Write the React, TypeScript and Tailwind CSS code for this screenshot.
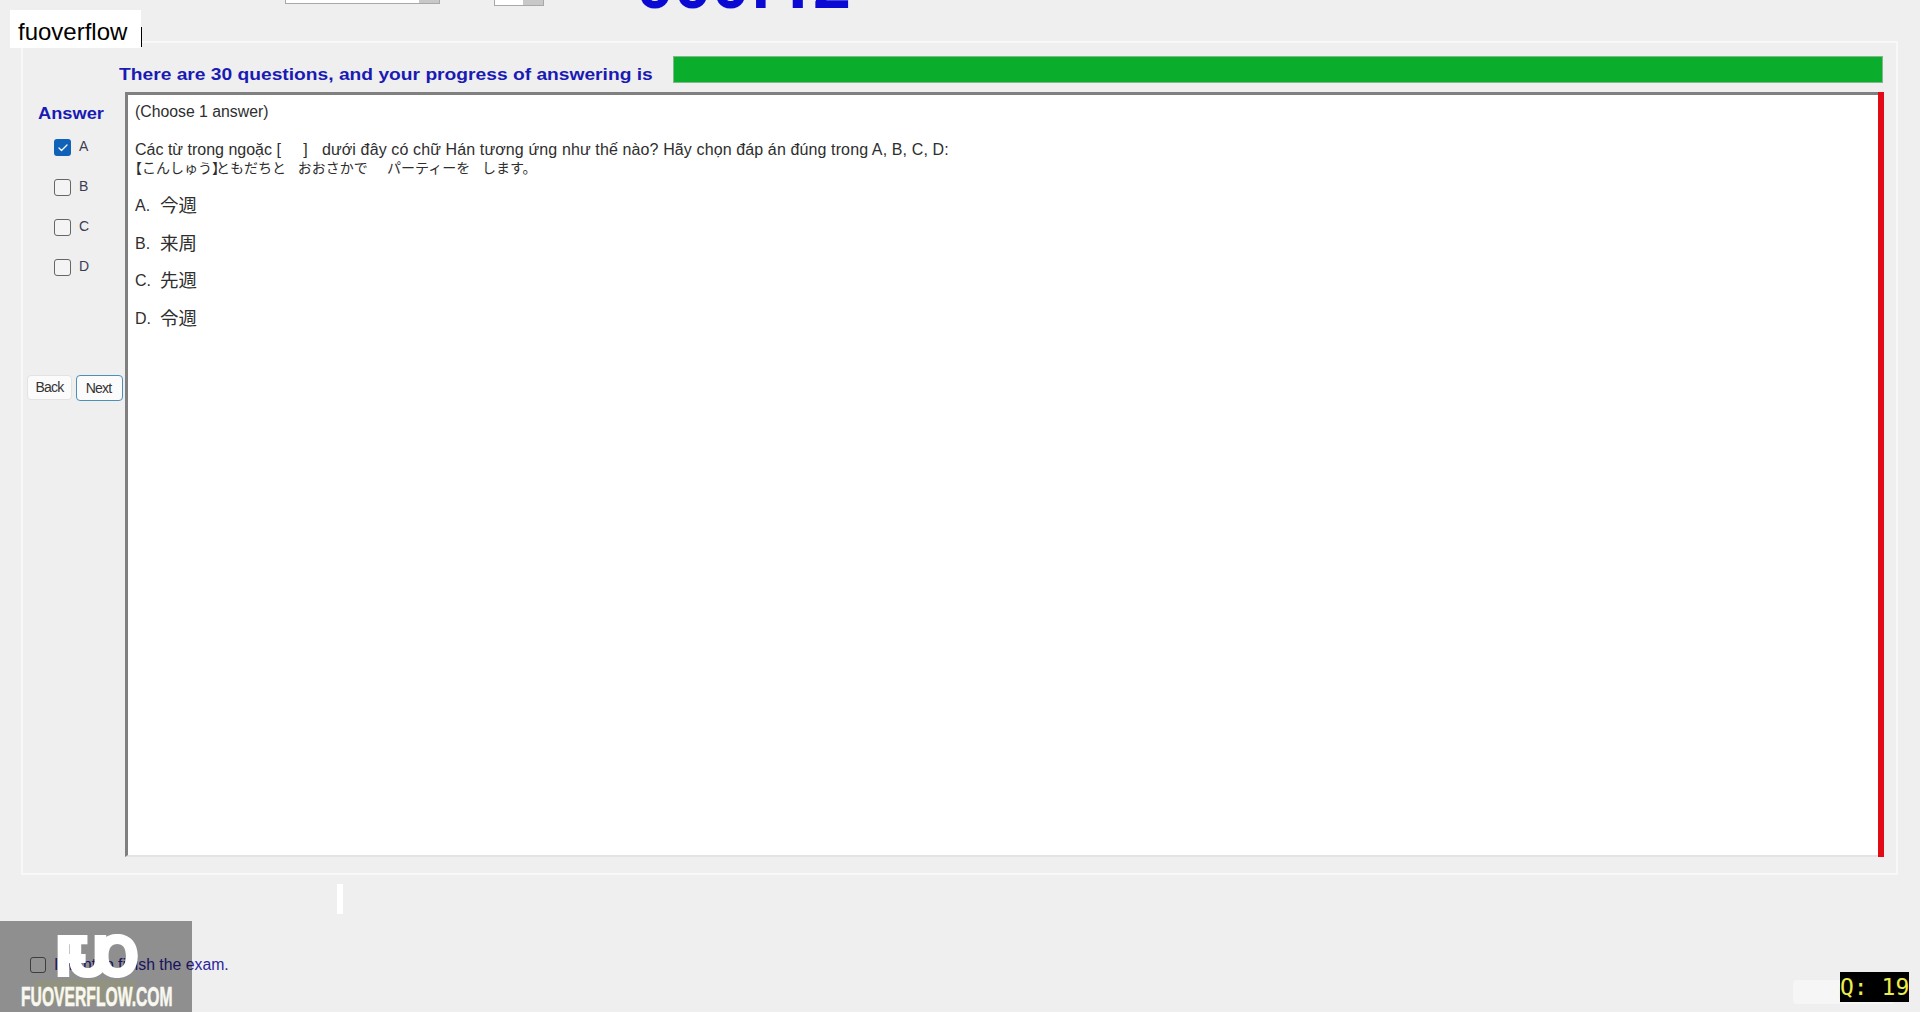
import { Check } from "lucide-react";

const answers = [
  { key: "A", text: "今週" },
  { key: "B", text: "来周" },
  { key: "C", text: "先週" },
  { key: "D", text: "令週" },
];

const cjk = "font-['Liberation_Sans','Noto_Sans_CJK_JP',sans-serif]";

function Box({ checked = false }: { checked?: boolean }) {
  if (checked) {
    return (
      <span className="flex h-[17px] w-[17px] items-center justify-center rounded-[3px] bg-[#0f62b8]">
        <Check size={12} strokeWidth={2.5} className="text-white" />
      </span>
    );
  }
  return <span className="h-[17px] w-[17px] rounded-[3px] border-[1.5px] border-[#666666] bg-[#f4f4f4]" />;
}

function Sidebar() {
  return (
    <div className="flex w-[102px] shrink-0 flex-col">
      <div className="mt-[11px] ml-[15px] origin-left scale-x-[1.14] text-[16px] leading-[22px] font-bold text-[#1a1ab4]">Answer</div>
      <div className="mt-[14px] flex flex-col gap-[23px] pl-[31px]">
        {answers.map((a, i) => (
          <div key={a.key} className="flex h-[17px] items-start gap-[8px]">
            <Box checked={i === 0} />
            <span className="-mt-[1px] text-[14px] leading-[17px] text-[#3c3c50]">{a.key}</span>
          </div>
        ))}
      </div>
      <div className="mt-[99px] flex gap-[4px] pl-[4px]">
        <button className="h-[25px] w-[45px] rounded-[4px] border border-[#e3e3e3] bg-[#fbfbfb] text-[14px] tracking-[-0.8px] text-[#333333]">
          Back
        </button>
        <button className="h-[26px] w-[47px] rounded-[4px] border-[1.5px] border-[#4a90b8] bg-[#fbfbfb] pr-[2px] text-[14px] tracking-[-0.8px] text-[#333333]">
          Next
        </button>
      </div>
    </div>
  );
}

function Question() {
  return (
    <div className="flex h-[765px] w-[1759px]">
      <div className={`flex-1 border-t-[3px] border-b-2 border-l-[3px] border-t-[#808080] border-b-[#e4e4e4] border-l-[#808080] bg-white pl-[7px] text-[#2e2e2e] ${cjk}`}>
        <p className="mt-[7px] text-[15.8px] leading-[19px]">(Choose 1 answer)</p>
        <p className="mt-[19px] text-[16px] leading-[19px]">
          Các từ trong ngoặc [&nbsp;&nbsp;&nbsp;&nbsp;&nbsp;]&nbsp;&nbsp;&nbsp;
          <span className="ml-[1px] tracking-[0.12px]">
            dưới đây có chữ Hán tương ứng như thế nào? Hãy chọn đáp án đúng trong A, B, C, D:
          </span>
        </p>
        <p className="text-[14px] leading-[19px] whitespace-pre">
          <span className="-ml-[7px]">【</span>こんしゅう<span className="-mr-[10px]">】</span>ともだちと   おおさかで     パーティーを   します。
        </p>
        <div className="mt-[18px] flex flex-col gap-[18.5px]">
          {answers.map((a) => (
            <p key={a.key} className="flex items-center gap-[10px] text-[16px] leading-[19px] whitespace-pre">
              <span className="w-[15px]">{a.key}.</span>
              <span className="text-[18.5px]">{a.text}</span>
            </p>
          ))}
        </div>
      </div>
      <div className="w-[6px] bg-[#e20a14]" />
    </div>
  );
}

export default function App() {
  return (
    <div className="relative flex h-[1012px] w-[1920px] flex-col overflow-hidden bg-[#efeff0] font-['Liberation_Sans',sans-serif]">
      {/* clipped top row */}
      <div className="flex h-[41px] shrink-0 items-start pl-[285px]">
        <div className="flex h-[4px] w-[155px] justify-end border-r border-b border-l border-[#a8a8a8] bg-white">
          <span className="h-[3px] w-[20px] bg-[#c8c8c8]" />
        </div>
        <div className="ml-[54px] flex h-[6px] w-[50px] justify-end border-r border-b border-l border-[#a8a8a8] bg-white">
          <span className="h-[5px] w-[20px] bg-[#c8c8c8]" />
        </div>
        <div className="-mt-[51px] ml-[92px] text-[68px] leading-[68px] font-bold text-[#0a0ad2]">
          000:<span className="inline-block w-[41px] text-center font-['Inter',sans-serif]">1</span>2
        </div>
      </div>

      {/* main panel */}
      <div className="ml-[21px] h-[834px] w-[1877px] shrink-0 border-2 border-[#f8f8f8]">
        <div className="flex h-[49px] items-start pl-[96px]">
          <div className="mt-[21px] w-[554px] shrink-0">
            <span className="block origin-left scale-x-[1.13] text-[17px] leading-[22px] font-bold whitespace-nowrap text-[#1a1ab4]">
              There are 30 questions, and your progress of answering is
            </span>
          </div>
          <div className="mt-[13px] h-[27px] w-[1210px] border border-[#7fb98a] bg-[#0aae2c]" />
        </div>
        <div className="flex">
          <Sidebar />
          <Question />
        </div>
      </div>

      <div className="mt-[9px] ml-[337px] h-[30px] w-[6px] bg-white" />

      {/* footer */}
      <div className="relative mt-auto flex h-[71px] items-start pl-[30px]">
        <div className="mt-[14px] flex items-center gap-[8px]">
          <span className="h-[16px] w-[16px] rounded-[3px] border-[1.5px] border-[#666666] bg-[#f4f4f4]" />
          <span className="text-[15.8px] leading-[20px] text-[#2b1f9c]">I want to finish the exam.</span>
        </div>
        <div className="absolute top-[39px] left-[35px] h-[23px] w-[100px] bg-[#f4f4d6]" />
        <div className="mt-[39px] mr-[25px] ml-auto flex h-[24px] w-[102px] items-center justify-center rounded-[4px] bg-[#f6f6f6] text-[15px] text-[#888888]">
          E
        </div>
      </div>

      {/* overlays */}
      <div className="absolute top-[10px] left-[10px] flex h-[38px] w-[131px] items-center bg-white pt-[5px] pl-[8px] text-[24px] text-black">
        fuoverflow
      </div>
      <div className="absolute top-[27px] left-[141px] h-[20px] w-px bg-black" />
      <div className="absolute right-[11px] bottom-[10px] h-[30px] w-[69px] bg-black text-center font-['DejaVu_Sans_Mono',monospace] text-[23px] leading-[30px] whitespace-nowrap text-[#ecec4a]">
        Q: 19
      </div>
      <div className="absolute bottom-0 left-0 flex h-[91px] w-[192px] flex-col items-start bg-black/40">
        <div className="mt-[6px] ml-[55px] flex h-[58px] items-center font-['Inter',sans-serif] text-[58px] leading-[58px] font-black text-white">
          <span>F</span>
          <span className="-ml-[22px]">U</span>
          <span className="-ml-[14px]">O</span>
        </div>
        <div className="-mt-[1px] ml-[21px] origin-left scale-x-[0.56] text-[28px] leading-[26px] font-bold whitespace-nowrap text-[#f8f8f0] [-webkit-text-stroke:0.6px_#f8f8f0]">
          FUOVERFLOW.COM
        </div>
      </div>
    </div>
  );
}
